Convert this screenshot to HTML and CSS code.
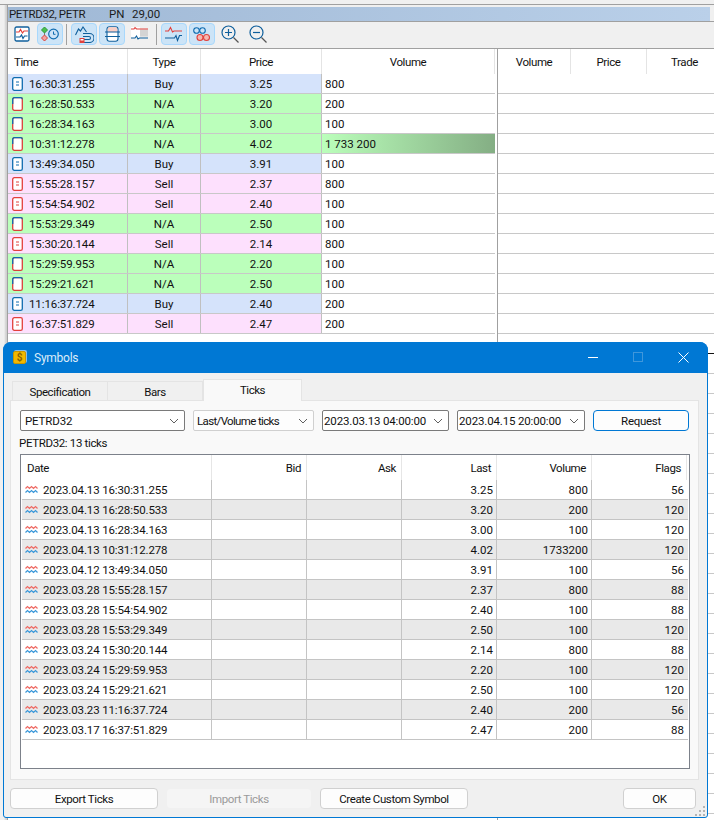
FILE: index.html
```html
<!DOCTYPE html>
<html lang="en">
<head>
<meta charset="utf-8">
<title>Symbols</title>
<link rel="stylesheet" href="styles.css">
</head>
<body>
<svg class="defs" width="0" height="0">
  <symbol id="tk-buy" viewBox="0 0 11 14"><rect x=".7" y=".7" width="9.6" height="12.6" rx="1.6" fill="#fff" stroke="#0f6cb0" stroke-width="1.3"/><path d="M4 5h3M4 8h3" stroke="#0f6cb0" stroke-width="1"/></symbol>
  <symbol id="tk-na" viewBox="0 0 11 14"><rect x=".7" y=".7" width="9.6" height="12.6" rx="1.6" fill="#fff" stroke="#d9403a" stroke-width="1.3"/><path d="M.7 7V2.3A1.6 1.6 0 0 1 2.3.7h6.4a1.6 1.6 0 0 1 1.6 1.6" fill="none" stroke="#0f6cb0" stroke-width="1.3"/></symbol>
  <symbol id="tk-sell" viewBox="0 0 11 14"><rect x=".7" y=".7" width="9.6" height="12.6" rx="1.6" fill="#fff" stroke="#e2403c" stroke-width="1.3"/><path d="M4 5h3M4 8h3" stroke="#e2403c" stroke-width="1"/></symbol>
  <symbol id="wave" viewBox="0 0 13 9"><path d="M.5 3.5l2-2 2 2 2-2 2 2 2-2 2 2" fill="none" stroke="#ee6a64" stroke-width="1.2"/><path d="M.5 7.5l2-2 2 2 2-2 2 2 2-2 2 2" fill="none" stroke="#3a97d8" stroke-width="1.2"/></symbol>
  <symbol id="chev" viewBox="0 0 10 6"><path d="M1 1l4 4 4-4" fill="none" stroke="#606060" stroke-width="1"/></symbol>
</svg>

<div class="top-strip"></div>
<div class="app">
  <div class="rail"></div>
  <div class="main">
    <div class="quote-wrap">
      <div class="quote"><span class="q-name">PETRD32, PETR</span><span class="q-pn">PN</span><span>29,00</span></div>
    </div>
    <div class="toolbar">
      <div class="tb">
        <svg width="16" height="16" viewBox="0 0 16 16"><rect x="1" y="1" width="14" height="14" rx="1.5" fill="#fff" stroke="#0f5f9c" stroke-width="1.3"/><path d="M2 6h3l1.500-2.500L8.500 7l1.500-2h4" fill="none" stroke="#e2403c" stroke-width="1.2"/><path d="M2 11h4l1.500-2 1.500 3.500 1.500-2.500h3" fill="none" stroke="#0f5f9c" stroke-width="1.2"/></svg>
      </div>
      <div class="tb on">
        <svg width="18" height="16" viewBox="0 0 18 16"><path d="M3.500 1l3 3-3 3-3-3z" fill="#4cc04c" stroke="#2a9a3a"/><path d="M3.500 9l3 3-3 3-3-3z" fill="#f3a3a3" stroke="#d9403a"/><path d="M3.500 7v2" stroke="#777"/><circle cx="12.500" cy="8" r="4.800" fill="none" stroke="#0f6cb0" stroke-width="1.200"/><path d="M12.500 5.500v2.800h2" fill="none" stroke="#0f6cb0"/></svg>
      </div>
      <div class="sep"></div>
      <div class="tb on">
        <svg width="19" height="17" viewBox="0 0 19 17"><path d="M.5 9L3.500 3l2 2 2.500-4 3.500 5" fill="none" stroke="#0f5f9c" stroke-width="1.100"/><path d="M8 7.500h6.500a4.500 4.500 0 0 1 0 9H6M8 10.500h6a1.500 1.500 0 0 1 0 3H8" fill="none" stroke="#0f5f9c" stroke-width="1.100"/><rect x="5" y="12.500" width="4" height="4" fill="#fff" stroke="#e2403c"/><rect x="5" y="14.500" width="4" height="2" fill="#e2403c"/></svg>
      </div>
      <div class="tb on">
        <svg width="15" height="16" viewBox="0 0 15 16"><rect x="2" y=".7" width="11" height="14.600" rx="2.500" fill="#fff" stroke="#0f5f9c" stroke-width="1.100"/><rect x="2.700" y="1.300" width="9.600" height="4.700" rx="1.500" fill="#f9cfc6"/><path d="M0 6h15M0 10.500h15" stroke="#0f5f9c" stroke-width="1.100"/></svg>
      </div>
      <div class="tb">
        <svg width="18" height="16" viewBox="0 0 18 16"><rect x="9" y="3.500" width="8" height="7" fill="#d4d4d4"/><rect x="0" y="1" width="9" height="11" fill="#fff"/><path d="M0 3h3l1-1.500L5.500 3H17" fill="none" stroke="#e2403c" stroke-width="1.100"/><path d="M0 12h4l1.500-2 1.500 3 1.500-1H17" fill="none" stroke="#0f5f9c" stroke-width="1.100"/></svg>
      </div>
      <div class="sep"></div>
      <div class="tb on">
        <svg width="18" height="16" viewBox="0 0 18 16"><path d="M0 5h3.500L5.500 1.500 7.500 6l1.500-1h8" fill="none" stroke="#e2403c" stroke-width="1.100"/><path d="M0 12h9.500l1.500-2.500 1.500 5 2-5H17" fill="none" stroke="#0f5f9c" stroke-width="1.100"/></svg>
      </div>
      <div class="tb on">
        <svg width="18" height="15" viewBox="0 0 18 15"><circle cx="3.500" cy="3.500" r="2.800" fill="none" stroke="#0f6cb0" stroke-width="1.100"/><circle cx="9.500" cy="3.500" r="2.800" fill="none" stroke="#0f6cb0" stroke-width="1.100"/><circle cx="7" cy="10.500" r="3" fill="#f6b8b0" stroke="#e2403c" stroke-width="1.100"/><circle cx="13.500" cy="10.500" r="3" fill="#f6b8b0" stroke="#e2403c" stroke-width="1.100"/></svg>
      </div>
      <div class="tb">
        <svg width="18" height="18" viewBox="0 0 18 18"><circle cx="7.500" cy="7.500" r="6.500" fill="none" stroke="#0f5f9c" stroke-width="1.200"/><path d="M7.500 4v7M4 7.500h7" stroke="#0f5f9c" stroke-width="1.200"/><path d="M12.500 12.500l5 5" stroke="#555" stroke-width="1.300"/></svg>
      </div>
      <div class="tb">
        <svg width="18" height="18" viewBox="0 0 18 18"><circle cx="7.500" cy="7.500" r="6.500" fill="none" stroke="#0f5f9c" stroke-width="1.200"/><path d="M4 7.500h7" stroke="#0f5f9c" stroke-width="1.200"/><path d="M12.500 12.500l5 5" stroke="#555" stroke-width="1.300"/></svg>
      </div>
    </div>
    <div class="panes">
      <div class="ticks-pane">
        <div class="t-row t-head">
          <div class="th-time">Time</div><div class="th">Type</div><div class="th">Price</div><div class="th th-vol">Volume</div>
        </div>
        <div class="t-row buy"><div class="c-time"><svg class="ti"><use href="#tk-buy"/></svg>16:30:31.255</div><div class="c">Buy</div><div class="c">3.25</div><div class="c-vol">800</div></div>
        <div class="t-row na"><div class="c-time"><svg class="ti"><use href="#tk-na"/></svg>16:28:50.533</div><div class="c">N/A</div><div class="c">3.20</div><div class="c-vol">200</div></div>
        <div class="t-row na"><div class="c-time"><svg class="ti"><use href="#tk-na"/></svg>16:28:34.163</div><div class="c">N/A</div><div class="c">3.00</div><div class="c-vol">100</div></div>
        <div class="t-row na"><div class="c-time"><svg class="ti"><use href="#tk-na"/></svg>10:31:12.278</div><div class="c">N/A</div><div class="c">4.02</div><div class="c-vol big">1 733 200</div></div>
        <div class="t-row buy"><div class="c-time"><svg class="ti"><use href="#tk-buy"/></svg>13:49:34.050</div><div class="c">Buy</div><div class="c">3.91</div><div class="c-vol">100</div></div>
        <div class="t-row sell"><div class="c-time"><svg class="ti"><use href="#tk-sell"/></svg>15:55:28.157</div><div class="c">Sell</div><div class="c">2.37</div><div class="c-vol">800</div></div>
        <div class="t-row sell"><div class="c-time"><svg class="ti"><use href="#tk-sell"/></svg>15:54:54.902</div><div class="c">Sell</div><div class="c">2.40</div><div class="c-vol">100</div></div>
        <div class="t-row na"><div class="c-time"><svg class="ti"><use href="#tk-na"/></svg>15:53:29.349</div><div class="c">N/A</div><div class="c">2.50</div><div class="c-vol">100</div></div>
        <div class="t-row sell"><div class="c-time"><svg class="ti"><use href="#tk-sell"/></svg>15:30:20.144</div><div class="c">Sell</div><div class="c">2.14</div><div class="c-vol">800</div></div>
        <div class="t-row na"><div class="c-time"><svg class="ti"><use href="#tk-na"/></svg>15:29:59.953</div><div class="c">N/A</div><div class="c">2.20</div><div class="c-vol">100</div></div>
        <div class="t-row na"><div class="c-time"><svg class="ti"><use href="#tk-na"/></svg>15:29:21.621</div><div class="c">N/A</div><div class="c">2.50</div><div class="c-vol">100</div></div>
        <div class="t-row buy"><div class="c-time"><svg class="ti"><use href="#tk-buy"/></svg>11:16:37.724</div><div class="c">Buy</div><div class="c">2.40</div><div class="c-vol">200</div></div>
        <div class="t-row sell"><div class="c-time"><svg class="ti"><use href="#tk-sell"/></svg>16:37:51.829</div><div class="c">Sell</div><div class="c">2.47</div><div class="c-vol">200</div></div>
        <div class="t-fill"></div>
      </div>
      <div class="book-pane">
        <div class="b-head"><div class="bh bh1">Volume</div><div class="bh bh2">Price</div><div class="bh bh3">Trade</div></div>
        <div class="b-fill"></div>
      </div>
    </div>
  </div>
</div>
<div class="stray"></div>

<section class="dialog">
  <header class="d-title">
    <span class="d-icon">$</span>
    <span class="d-name">Symbols</span>
    <svg class="w-min" width="10" height="1" viewBox="0 0 10 1"><rect width="10" height="1" fill="#fff"/></svg>
    <svg class="w-max" width="10" height="10" viewBox="0 0 10 10"><rect x=".5" y=".5" width="9" height="9" fill="none" stroke="#3f97db"/></svg>
    <svg class="w-close" width="11" height="11" viewBox="0 0 11 11"><path d="M.5.5l10 10M10.500.5l-10 10" stroke="#fff"/></svg>
  </header>
  <div class="tabs">
    <div class="tab tab-a">Specification</div>
    <div class="tab tab-b">Bars</div>
    <div class="tab tab-c">Ticks</div>
  </div>
  <div class="panel">
    <div class="controls">
      <div class="sel s1 dark"><span>PETRD32</span><svg class="chev"><use href="#chev"/></svg></div>
      <div class="sel s2"><span>Last/Volume ticks</span><svg class="chev"><use href="#chev"/></svg></div>
      <div class="sel s3 dark"><span>2023.03.13 04:00:00</span><svg class="chev"><use href="#chev"/></svg></div>
      <div class="sel s4 dark"><span>2023.04.15 20:00:00</span><svg class="chev"><use href="#chev"/></svg></div>
      <div class="request">Request</div>
    </div>
    <div class="count">PETRD32: 13 ticks</div>
    <div class="grid">
      <div class="g-row g-head"><div class="gh gh-date">Date</div><div class="gh">Bid</div><div class="gh">Ask</div><div class="gh">Last</div><div class="gh">Volume</div><div class="gh gh-last">Flags</div></div>
      <div class="g-row"><div class="g-date"><svg class="wv"><use href="#wave"/></svg>2023.04.13 16:30:31.255</div><div class="g"></div><div class="g"></div><div class="g">3.25</div><div class="g">800</div><div class="g g-end">56</div></div>
      <div class="g-row alt"><div class="g-date"><svg class="wv"><use href="#wave"/></svg>2023.04.13 16:28:50.533</div><div class="g"></div><div class="g"></div><div class="g">3.20</div><div class="g">200</div><div class="g g-end">120</div></div>
      <div class="g-row"><div class="g-date"><svg class="wv"><use href="#wave"/></svg>2023.04.13 16:28:34.163</div><div class="g"></div><div class="g"></div><div class="g">3.00</div><div class="g">100</div><div class="g g-end">120</div></div>
      <div class="g-row alt"><div class="g-date"><svg class="wv"><use href="#wave"/></svg>2023.04.13 10:31:12.278</div><div class="g"></div><div class="g"></div><div class="g">4.02</div><div class="g">1733200</div><div class="g g-end">120</div></div>
      <div class="g-row"><div class="g-date"><svg class="wv"><use href="#wave"/></svg>2023.04.12 13:49:34.050</div><div class="g"></div><div class="g"></div><div class="g">3.91</div><div class="g">100</div><div class="g g-end">56</div></div>
      <div class="g-row alt"><div class="g-date"><svg class="wv"><use href="#wave"/></svg>2023.03.28 15:55:28.157</div><div class="g"></div><div class="g"></div><div class="g">2.37</div><div class="g">800</div><div class="g g-end">88</div></div>
      <div class="g-row"><div class="g-date"><svg class="wv"><use href="#wave"/></svg>2023.03.28 15:54:54.902</div><div class="g"></div><div class="g"></div><div class="g">2.40</div><div class="g">100</div><div class="g g-end">88</div></div>
      <div class="g-row alt"><div class="g-date"><svg class="wv"><use href="#wave"/></svg>2023.03.28 15:53:29.349</div><div class="g"></div><div class="g"></div><div class="g">2.50</div><div class="g">100</div><div class="g g-end">120</div></div>
      <div class="g-row"><div class="g-date"><svg class="wv"><use href="#wave"/></svg>2023.03.24 15:30:20.144</div><div class="g"></div><div class="g"></div><div class="g">2.14</div><div class="g">800</div><div class="g g-end">88</div></div>
      <div class="g-row alt"><div class="g-date"><svg class="wv"><use href="#wave"/></svg>2023.03.24 15:29:59.953</div><div class="g"></div><div class="g"></div><div class="g">2.20</div><div class="g">100</div><div class="g g-end">120</div></div>
      <div class="g-row"><div class="g-date"><svg class="wv"><use href="#wave"/></svg>2023.03.24 15:29:21.621</div><div class="g"></div><div class="g"></div><div class="g">2.50</div><div class="g">100</div><div class="g g-end">120</div></div>
      <div class="g-row alt"><div class="g-date"><svg class="wv"><use href="#wave"/></svg>2023.03.23 11:16:37.724</div><div class="g"></div><div class="g"></div><div class="g">2.40</div><div class="g">200</div><div class="g g-end">56</div></div>
      <div class="g-row"><div class="g-date"><svg class="wv"><use href="#wave"/></svg>2023.03.17 16:37:51.829</div><div class="g"></div><div class="g"></div><div class="g">2.47</div><div class="g">200</div><div class="g g-end">88</div></div>
    </div>
  </div>
  <footer class="d-foot">
    <div class="btn b-export">Export Ticks</div>
    <div class="btn b-import">Import Ticks</div>
    <div class="btn b-create">Create Custom Symbol</div>
    <div class="btn b-ok">OK</div>
  </footer>
  <svg class="grip" width="11" height="11" viewBox="0 0 11 11"><path d="M8 0h2v2H8zM4 4h2v2H4zM8 4h2v2H8zM0 8h2v2H0zM4 8h2v2H4zM8 8h2v2H8z" fill="#b4b4b4"/></svg>
</section>
</body>
</html>
```

FILE: styles.css
```css
* { box-sizing: border-box; }
html, body { margin: 0; padding: 0; }
body {
  position: relative;
  width: 714px;
  height: 820px;
  overflow: hidden;
  background: #f0f0f0;
  color: #111;
  font-family: Roboto, "Open Sans", sans-serif;
  font-size: 11.5px;
}
.defs { position: absolute; }

.top-strip { height: 5px; background: #f0f0f0; border-bottom: 1px solid #a0a0a0; }
.app { display: flex; height: 815px; }
.rail { width: 8px; flex: none; background: linear-gradient(90deg, #f0f0f0 0 4px, #d0d0d0 6px); border-right: 1px solid #a0a0a0; }
.main { flex: 1; display: flex; flex-direction: column; min-width: 0; }

.quote-wrap { height: 17px; padding-top: 2px; border-bottom: 1px solid #a0a0a0; }
.quote {
  width: 702px;
  height: 14px;
  display: flex;
  align-items: center;
  padding-left: 1px;
  background: linear-gradient(90deg, #9fb8d5, #bad0e9);
  color: #1c1c1c;
}
.q-name { width: 100px; letter-spacing: -0.4px; }
.q-pn { width: 23px; }

.toolbar {
  height: 27px;
  display: flex;
  align-items: flex-start;
  gap: 2px;
  padding: 1px 0 0 1px;
  border-bottom: 1px solid #a0a0a0;
}
.tb {
  width: 26px;
  height: 22px;
  display: flex;
  align-items: center;
  justify-content: center;
  border: 1px solid transparent;
  border-radius: 4px;
}
.tb.on { background: #cce4f7; border-color: #a8d8fc; }
.sep { width: 1px; height: 21px; margin: 1px 2px 0 1px; background: #a0a0a0; }

.panes { flex: 1; display: flex; min-height: 0; }
.ticks-pane { width: 489px; flex: none; display: flex; flex-direction: column; background: #fff; }
.book-pane { flex: 1; display: flex; flex-direction: column; background: #fff; border-left: 1px solid #a0a0a0; }

.t-row {
  display: grid;
  grid-template-columns: 120px 73px 121px 173px;
  grid-template-rows: 19px;
  height: 20px;
  width: 487px;
  flex: none;
  line-height: 21px;
  border-bottom: 1px solid #c8c8c8;
}
.t-head { grid-template-rows: 25px; height: 25px; line-height: 27px; border-bottom: 0; letter-spacing: -0.4px; }
.th-time { padding-left: 6px; border-right: 1px solid #e4e4e4; }
.th { text-align: center; border-right: 1px solid #e4e4e4; }
.buy { background: #d5e3fb; }
.na { background: #bbffbb; }
.sell { background: #fde0fd; }
.c-time {
  display: flex;
  align-items: center;
  gap: 6px;
  padding: 2px 0 0 4px;
  border-right: 1px solid #c0c0c0;
  letter-spacing: -0.1px;
}
.ti { width: 11px; height: 14px; flex: none; margin-top: -2px; }
.c { text-align: center; border-right: 1px solid #c0c0c0; }
.c-vol { padding-left: 3px; background: #fff; }
.c-vol.big { background: linear-gradient(90deg, #bbffbb, #84ae84); }
.t-fill, .b-fill { flex: 1; background: repeating-linear-gradient(180deg, #fff 0 19px, #c8c8c8 19px 20px); }
.t-fill { width: 487px; }

.b-head { display: flex; height: 25px; flex: none; line-height: 27px; text-align: center; letter-spacing: -0.4px; }
.bh { border-right: 1px solid #e4e4e4; }
.bh1 { width: 73px; }
.bh2 { width: 76px; }
.bh3 { width: 75px; border-right: 0; }

.stray { position: absolute; left: 708px; top: 353px; width: 6px; height: 1px; background: #111; }

.dialog {
  position: absolute;
  left: 3px;
  top: 342px;
  width: 705px;
  height: 476px;
  display: flex;
  flex-direction: column;
  background: #f0f0f0;
  border: 1px solid #0078d4;
  border-radius: 8px 8px 3px 3px;
}
.d-title {
  position: relative;
  flex: none;
  display: flex;
  align-items: center;
  margin: -1px -1px 0;
  height: 31px;
  padding-left: 10px;
  background: #0078d4;
  border-radius: 8px 8px 0 0;
  color: #dcecf9;
  font-size: 12px;
}
.d-name { margin-top: 1px; letter-spacing: -0.25px; }
.d-icon {
  width: 13px;
  height: 13px;
  margin-right: 8px;
  border-radius: 2px;
  background: #f2b800;
  border: 1px solid #c99700;
  box-shadow: 1px -1px 0 #8fbfe6;
  color: #8a6200;
  font-size: 10px;
  font-weight: 700;
  line-height: 11px;
  text-align: center;
}
.w-min { position: absolute; left: 585px; top: 15px; }
.w-max { position: absolute; left: 630px; top: 10px; }
.w-close { position: absolute; left: 675px; top: 10px; }

.tabs { display: flex; height: 20px; margin: 8px 0 -1px 8px; position: relative; z-index: 1; flex: none; letter-spacing: -0.45px; }
.tab { text-align: center; line-height: 20px; border: 1px solid #e4e4e4; }
.tab-a { width: 96px; }
.tab-b { width: 95px; border-left: 0; }
.tab-c { width: 99px; height: 22px; margin-top: -2px; background: #f9f9f9; border-bottom: 0; line-height: 21px; }

.panel {
  height: 380px;
  flex: none;
  margin: 0 8px 0 6px;
  padding: 9px 0 0 9px;
  background: #f9f9f9;
  border: 1px solid #e4e4e4;
}
.controls { display: flex; gap: 8px; height: 21px; }
.sel {
  height: 21px;
  display: flex;
  align-items: center;
  justify-content: space-between;
  padding: 2px 5px 0 1px;
  background: #fff;
  border: 1px solid #d0d0d0;
  border-radius: 2px;
  line-height: 17px;
  letter-spacing: -0.15px;
}
.sel.dark { border-color: #7a7a7a; }
.chev { width: 10px; height: 6px; flex: none; margin-top: -2px; }
.s1 { width: 165px; padding-left: 4px; }
.s2 { width: 121px; background: #fdfdfd; padding-left: 3px; letter-spacing: -0.65px; }
.s3 { width: 127px; }
.s4 { width: 128px; }
.request {
  width: 96px;
  height: 21px;
  line-height: 21px;
  text-align: center;
  background: #fdfdfd;
  border: 1px solid #0078d4;
  border-radius: 4px;
  letter-spacing: -0.3px;
}
.count { height: 23px; line-height: 24px; margin-left: -1px; letter-spacing: -0.35px; }

.grid { width: 670px; height: 315px; background: #fff; border: 1px solid #7c818a; }
.g-row {
  display: grid;
  grid-template-columns: 190px 95px 95px 95px 95px 96px;
  grid-template-rows: 19px;
  width: 666px;
  margin-left: 1px;
  height: 20px;
  line-height: 21px;
  border-bottom: 1px solid #c4c4c4;
}
.g-head { grid-template-rows: 25px; height: 25px; line-height: 26px; border-bottom: 0; letter-spacing: -0.4px; }
.gh { text-align: right; padding-right: 5px; border-right: 1px solid #e6e6e6; }
.gh-date { text-align: left; padding-left: 5px; }
.gh-last { padding-right: 5px; margin-right: 1px; }
.alt { background: #e9e9e9; }
.g-date {
  display: flex;
  align-items: center;
  gap: 5px;
  padding: 2px 0 0 3px;
  border-right: 1px solid #c4c4c4;
  letter-spacing: -0.13px;
}
.wv { width: 13px; height: 9px; flex: none; margin-top: -2px; }
.g { text-align: right; padding-right: 3px; border-right: 1px solid #c4c4c4; }
.g-end { border-right: 0; padding-right: 4px; }

.d-foot { display: flex; gap: 8px; margin: 8px 11px 0 6px; }
.btn {
  height: 21px;
  line-height: 21px;
  text-align: center;
  background: #fdfdfd;
  border: 1px solid #d0d0d0;
  border-radius: 4px;
  letter-spacing: -0.4px;
}
.b-export { width: 148px; }
.b-import { width: 146px; background: #f5f5f5; border-color: #f0f0f0; color: #9a9a9a; }
.b-create { width: 148px; }
.b-ok { width: 73px; margin-left: auto; }
.grip { position: absolute; right: 1px; bottom: 0; }
```
